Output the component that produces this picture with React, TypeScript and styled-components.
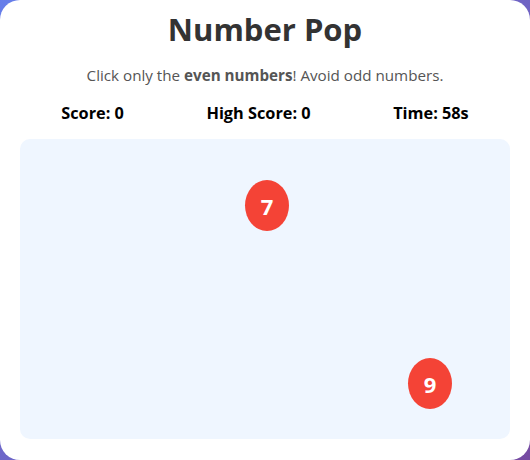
import styled, { createGlobalStyle } from 'styled-components';

const GlobalStyle = createGlobalStyle`
  html, body {
    margin: 0;
    padding: 0;
    height: 100%;
  }
  body {
    background: linear-gradient(135deg, #667eea 0%, #764ba2 100%);
    font-family: 'Open Sans', 'Noto Sans', sans-serif;
    overflow: hidden;
  }
`;

type Bubble = {
  id: number;
  value: number;
  x: number;
  y: number;
};

const bubbles: Bubble[] = [
  { id: 1, value: 7, x: 225, y: 41 },
  { id: 2, value: 9, x: 388, y: 219 },
];

const App = () => {
  return (
    <>
      <GlobalStyle />
      <Card>
        <Title>Number Pop</Title>
        <Instructions>
          Click only the <strong>even numbers</strong>! Avoid odd numbers.
        </Instructions>
        <Stats>
          <Stat>Score: 0</Stat>
          <Stat>High Score: 0</Stat>
          <Stat>Time: 58s</Stat>
        </Stats>
        <GameArea>
          {bubbles.map((b) => (
            <NumberBubble key={b.id} style={{ left: b.x, top: b.y }}>
              {b.value}
            </NumberBubble>
          ))}
        </GameArea>
      </Card>
    </>
  );
};

export default App;

const Card = styled.div`
  box-sizing: border-box;
  width: 530px;
  height: 460px;
  background: #ffffff;
  border-radius: 20px;
  padding: 8px 20px 21px;
  display: flex;
  flex-direction: column;
  align-items: center;
`;

const Title = styled.h1`
  margin: 0;
  font-size: 31px;
  font-weight: 700;
  color: #333333;
  line-height: 42px;
`;

const Instructions = styled.p`
  margin: 15px 0 0;
  font-size: 15.2px;
  color: #555555;
  line-height: 20px;

  strong {
    font-weight: 700;
  }
`;

const Stats = styled.div`
  width: 100%;
  display: flex;
  justify-content: space-around;
  margin-top: 17px;
`;

const Stat = styled.div`
  font-size: 16.3px;
  font-weight: 700;
  color: #000000;
  line-height: 22px;
`;

const GameArea = styled.div`
  position: relative;
  width: 100%;
  flex: 1;
  margin-top: 15px;
  background: #eff6ff;
  border-radius: 10px;
  overflow: hidden;
`;

const NumberBubble = styled.div`
  position: absolute;
  width: 44px;
  height: 51px;
  border-radius: 50%;
  background: #f44336;
  color: #ffffff;
  font-size: 22px;
  font-weight: 700;
  display: flex;
  align-items: center;
  justify-content: center;
  cursor: pointer;
  user-select: none;
`;
